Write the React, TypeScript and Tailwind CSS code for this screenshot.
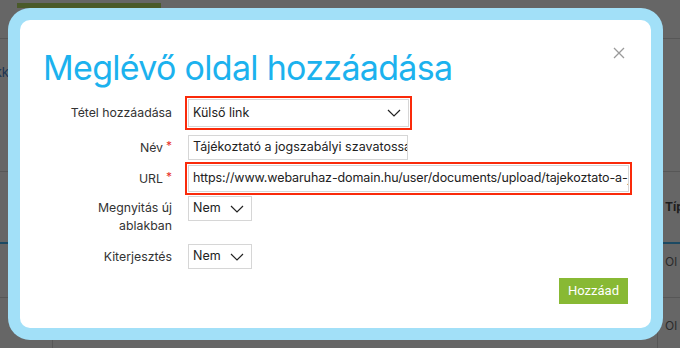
import React from 'react';

const font = { fontFamily: 'Inter, "Noto Sans", sans-serif' };

const Chevron: React.FC<{ className?: string }> = ({ className }) => (
  <svg className={className} width="14" height="8" viewBox="0 0 14 8" fill="none">
    <path d="M1 1l6 6 6-6" stroke="#222" strokeWidth="1.2" />
  </svg>
);

const Label: React.FC<{ children: React.ReactNode; required?: boolean }> = ({
  children,
  required,
}) => (
  <div className="w-[152px] shrink-0 text-right text-[12.3px] leading-[18px] text-[#333]">
    {children}
    {required && <span className="relative -top-[2px] ml-[3px] text-[12px] text-[#e8312a]">*</span>}
  </div>
);

// small Igen/Nem select
const SmallSelect: React.FC<{ value: string }> = ({ value }) => (
  <div className="ml-[16px] flex h-[25px] w-[64px] items-center justify-between border border-[#d6d6d6] bg-white pl-[4px] pr-[7px] text-[12.5px] text-[#222]">
    <span>{value}</span>
    <Chevron />
  </div>
);

export default function App() {
  return (
    <div className="relative h-[348px] w-[680px] overflow-hidden bg-[#666]" style={font}>
      {/* page behind the overlay */}
      <div className="h-[39px] border-b border-[#575757] pt-[3px]">
        <div className="ml-[17px] h-[5px] w-[144px] bg-[#4a5a2a]" />
      </div>
      <div className="h-[133px] border-b border-[#575757] pt-[25px]">
        <div className="flex w-[9px] justify-end whitespace-nowrap text-[13px] leading-[16px] text-[#1b3553]">
          <span>kk</span>
        </div>
      </div>
      <div className="flex h-[72px] items-center justify-end border-b-2 border-[#1c4a63]">
        <span className="w-[15px] whitespace-nowrap text-[12px] font-bold text-[#1d1d1d]">Típ</span>
      </div>
      <div className="flex h-[54px] justify-end border-b border-[#575757] pt-[9px]">
        <span className="w-[15px] whitespace-nowrap text-[12px] text-[#2a2a2a]">Ol</span>
      </div>
      <div className="flex h-[50px] justify-between">
        <div className="ml-[52px] h-full border-l border-[#575757]" />
        <div className="flex h-full pt-[19px]">
          <span className="w-[15px] whitespace-nowrap text-[12px] text-[#2a2a2a]">Ol</span>
        </div>
      </div>
      <div className="absolute bottom-0 left-[657px] top-[298px] border-l border-[#575757]" />

      {/* modal */}
      <div className="absolute left-[8px] top-[8px] h-[332px] w-[655px] rounded-[22px] bg-[#a2e0f8] p-[12px]">
        <div className="relative h-full rounded-[10px] bg-white">
          <button className="absolute right-[26px] top-[27px] p-0">
            <svg width="12" height="12" viewBox="0 0 12 12">
              <path d="M1 1l10 10M11 1L1 11" stroke="#9a9a9a" strokeWidth="1.3" />
            </svg>
          </button>

          <h1 className="pl-[23px] pt-[31px] text-[34px] leading-[34px] font-normal tracking-[-0.7px] text-[#1cb2ee]">
            Meglévő oldal hozzáadása
          </h1>

          {/* Tétel hozzáadása */}
          <div className="mt-[11px] flex items-center">
            <Label>Tétel hozzáadása</Label>
            <div className="ml-[13px] border-2 border-[#fa2a0a] p-px">
              <div className="flex h-[28px] w-[221px] items-center justify-between border border-[#d6d6d6] pl-[4px] pr-[7px] text-[12.5px] text-[#222]">
                <span>Külső link</span>
                <Chevron />
              </div>
            </div>
          </div>

          {/* Név */}
          <div className="mt-[2px] flex items-center pb-[2px] pt-[3px]">
            <Label required>Név</Label>
            <div className="ml-[16px] flex h-[25px] w-[220px] items-center overflow-hidden whitespace-nowrap border border-[#d6d6d6] pl-[4px] text-[12.5px] text-[#222]">
              Tájékoztató a jogszabályi szavatossági jogokról
            </div>
          </div>

          {/* URL */}
          <div className="flex items-center">
            <Label required>URL</Label>
            <div className="ml-[13px] border-2 border-[#fa2a0a] p-px">
              <div className="flex h-[27px] w-[441px] items-center overflow-hidden whitespace-nowrap border border-[#d6d6d6] pl-[4px] text-[12.5px] tracking-[-0.1px] text-[#222]">
                https://www.webaruhaz-domain.hu/user/documents/upload/tajekoztato-a-jogszabalyi-szavatossagi-jogokrol.pdf
              </div>
            </div>
          </div>

          {/* Megnyitás új ablakban */}
          <div className="mt-[1px] flex items-start">
            <div className="pt-[3px]">
              <Label>
                Megnyitás új
                <br />
                ablakban
              </Label>
            </div>
            <SmallSelect value="Nem" />
          </div>

          {/* Kiterjesztés */}
          <div className="mt-[9px] flex items-center">
            <Label>Kiterjesztés</Label>
            <SmallSelect value="Nem" />
          </div>

          <div className="mt-[9px] flex justify-end pr-[23px]">
            <button
              className="h-[26px] w-[69px] bg-[#88b934] text-[13px] text-white"
              style={{ fontFamily: 'Roboto, "Noto Sans", sans-serif' }}
            >
              Hozzáad
            </button>
          </div>
        </div>
      </div>
    </div>
  );
}
